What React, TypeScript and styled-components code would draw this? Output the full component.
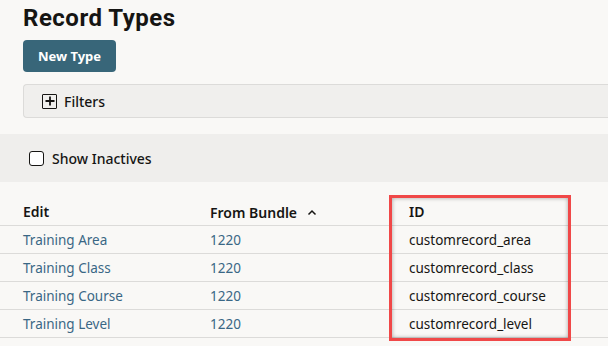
import React from 'react';
import styled, { createGlobalStyle } from 'styled-components';

const GlobalStyle = createGlobalStyle`
  html, body {
    margin: 0;
    padding: 0;
    background: #f9f8f6;
    font-family: 'Noto Sans', 'Open Sans', sans-serif;
    color: #161513;
    overflow: hidden;
  }
`;

interface RecordRow {
  name: string;
  bundle: string;
  id: string;
}

const ROWS: RecordRow[] = [
  { name: 'Training Area', bundle: '1220', id: 'customrecord_area' },
  { name: 'Training Class', bundle: '1220', id: 'customrecord_class' },
  { name: 'Training Course', bundle: '1220', id: 'customrecord_course' },
  { name: 'Training Level', bundle: '1220', id: 'customrecord_level' },
];

const App: React.FC = () => {
  return (
    <Page>
      <GlobalStyle />
      <Header>
        <Title>Record Types</Title>
        <NewButton>New Type</NewButton>
        <FiltersBar>
          <PlusBox>
            <svg width="12" height="12" viewBox="0 0 12 12">
              <path d="M6 1.5v9M1.5 6h9" stroke="#161513" strokeWidth="1.8" />
            </svg>
          </PlusBox>
          <FiltersLabel>Filters</FiltersLabel>
        </FiltersBar>
      </Header>
      <InactivesBand>
        <CheckBox />
        <InactivesLabel>Show Inactives</InactivesLabel>
      </InactivesBand>
      <TableWrap>
        <Table>
          <thead>
            <tr>
              <HeadCell width={187}>Edit</HeadCell>
              <HeadCell width={199}>
                From Bundle
                <Caret>
                  <svg width="10" height="7" viewBox="0 0 10 7">
                    <path d="M1.5 5.5L5 2l3.5 3.5" stroke="#161513" strokeWidth="1.5" fill="none" />
                  </svg>
                </Caret>
              </HeadCell>
              <HeadCell>ID</HeadCell>
            </tr>
          </thead>
          <tbody>
            {ROWS.map((row) => (
              <tr key={row.id}>
                <Cell link>{row.name}</Cell>
                <Cell link>{row.bundle}</Cell>
                <Cell>{row.id}</Cell>
              </tr>
            ))}
          </tbody>
        </Table>
        <Highlight />
      </TableWrap>
    </Page>
  );
};

const Page = styled.div`
  width: 608px;
  height: 346px;
  display: flex;
  flex-direction: column;
`;

const Header = styled.div`
  display: flex;
  flex-direction: column;
  align-items: flex-start;
  padding: 3px 0 0 23px;
`;

const Title = styled.h1`
  margin: 0;
  font-family: Roboto, 'Noto Sans', sans-serif;
  font-size: 24px;
  font-weight: 700;
  line-height: 31px;
  letter-spacing: 0.5px;
`;

const NewButton = styled.button`
  margin-top: 6px;
  width: 93px;
  height: 32px;
  border: none;
  border-radius: 4px;
  background: #386679;
  color: #ffffff;
  font-family: inherit;
  font-size: 13px;
  font-weight: 700;
  padding: 0;
`;

const FiltersBar = styled.div`
  margin-top: 12px;
  align-self: stretch;
  height: 32px;
  display: flex;
  align-items: center;
  gap: 7px;
  padding-left: 18px;
  background: #f0efed;
  border: 1px solid #dcdbd9;
  border-right: none;
  border-radius: 4px 0 0 4px;
`;

const PlusBox = styled.span`
  width: 13px;
  height: 13px;
  border: 1.5px solid #161513;
  border-radius: 1px;
  display: flex;
  align-items: center;
  justify-content: center;
`;

const FiltersLabel = styled.span`
  font-size: 14px;
  font-weight: 500;
`;

const InactivesBand = styled.div`
  margin-top: 16px;
  height: 48px;
  display: flex;
  align-items: center;
  gap: 8px;
  padding-left: 29px;
  background: #efeeec;
`;

const CheckBox = styled.span`
  width: 13px;
  height: 13px;
  border: 1.5px solid #161513;
  border-radius: 3px;
  background: #ffffff;
`;

const InactivesLabel = styled.span`
  font-size: 14px;
  font-weight: 500;
`;

const TableWrap = styled.div`
  position: relative;
  margin-top: 15px;
`;

const Table = styled.table`
  border-collapse: collapse;
  width: 608px;
  table-layout: fixed;
`;

const HeadCell = styled.th<{ width?: number }>`
  width: ${(p) => (p.width ? `${p.width}px` : 'auto')};
  text-align: left;
  font-size: 14px;
  font-weight: 600;
  height: 28px;
  padding: 0;
  vertical-align: middle;
  border-bottom: 1px solid #dcdbd9;
  white-space: nowrap;
  &:first-child {
    padding-left: 23px;
  }
`;

const Caret = styled.span`
  display: inline-block;
  margin-left: 10px;
  vertical-align: 2px;
`;

const Cell = styled.td<{ link?: boolean }>`
  height: 27px;
  font-size: 13.5px;
  padding: 0;
  color: ${(p) => (p.link ? '#3a6785' : '#161513')};
  border-bottom: 1px solid #dcdbd9;
  white-space: nowrap;
  &:first-child {
    padding-left: 23px;
  }
`;

const Highlight = styled.div`
  position: absolute;
  left: 389px;
  top: -2px;
  width: 182px;
  height: 146px;
  box-sizing: border-box;
  border: 3px solid #f04848;
  box-shadow: inset 0 0 4px rgba(0, 0, 0, 0.35);
  pointer-events: none;
`;

export default App;
